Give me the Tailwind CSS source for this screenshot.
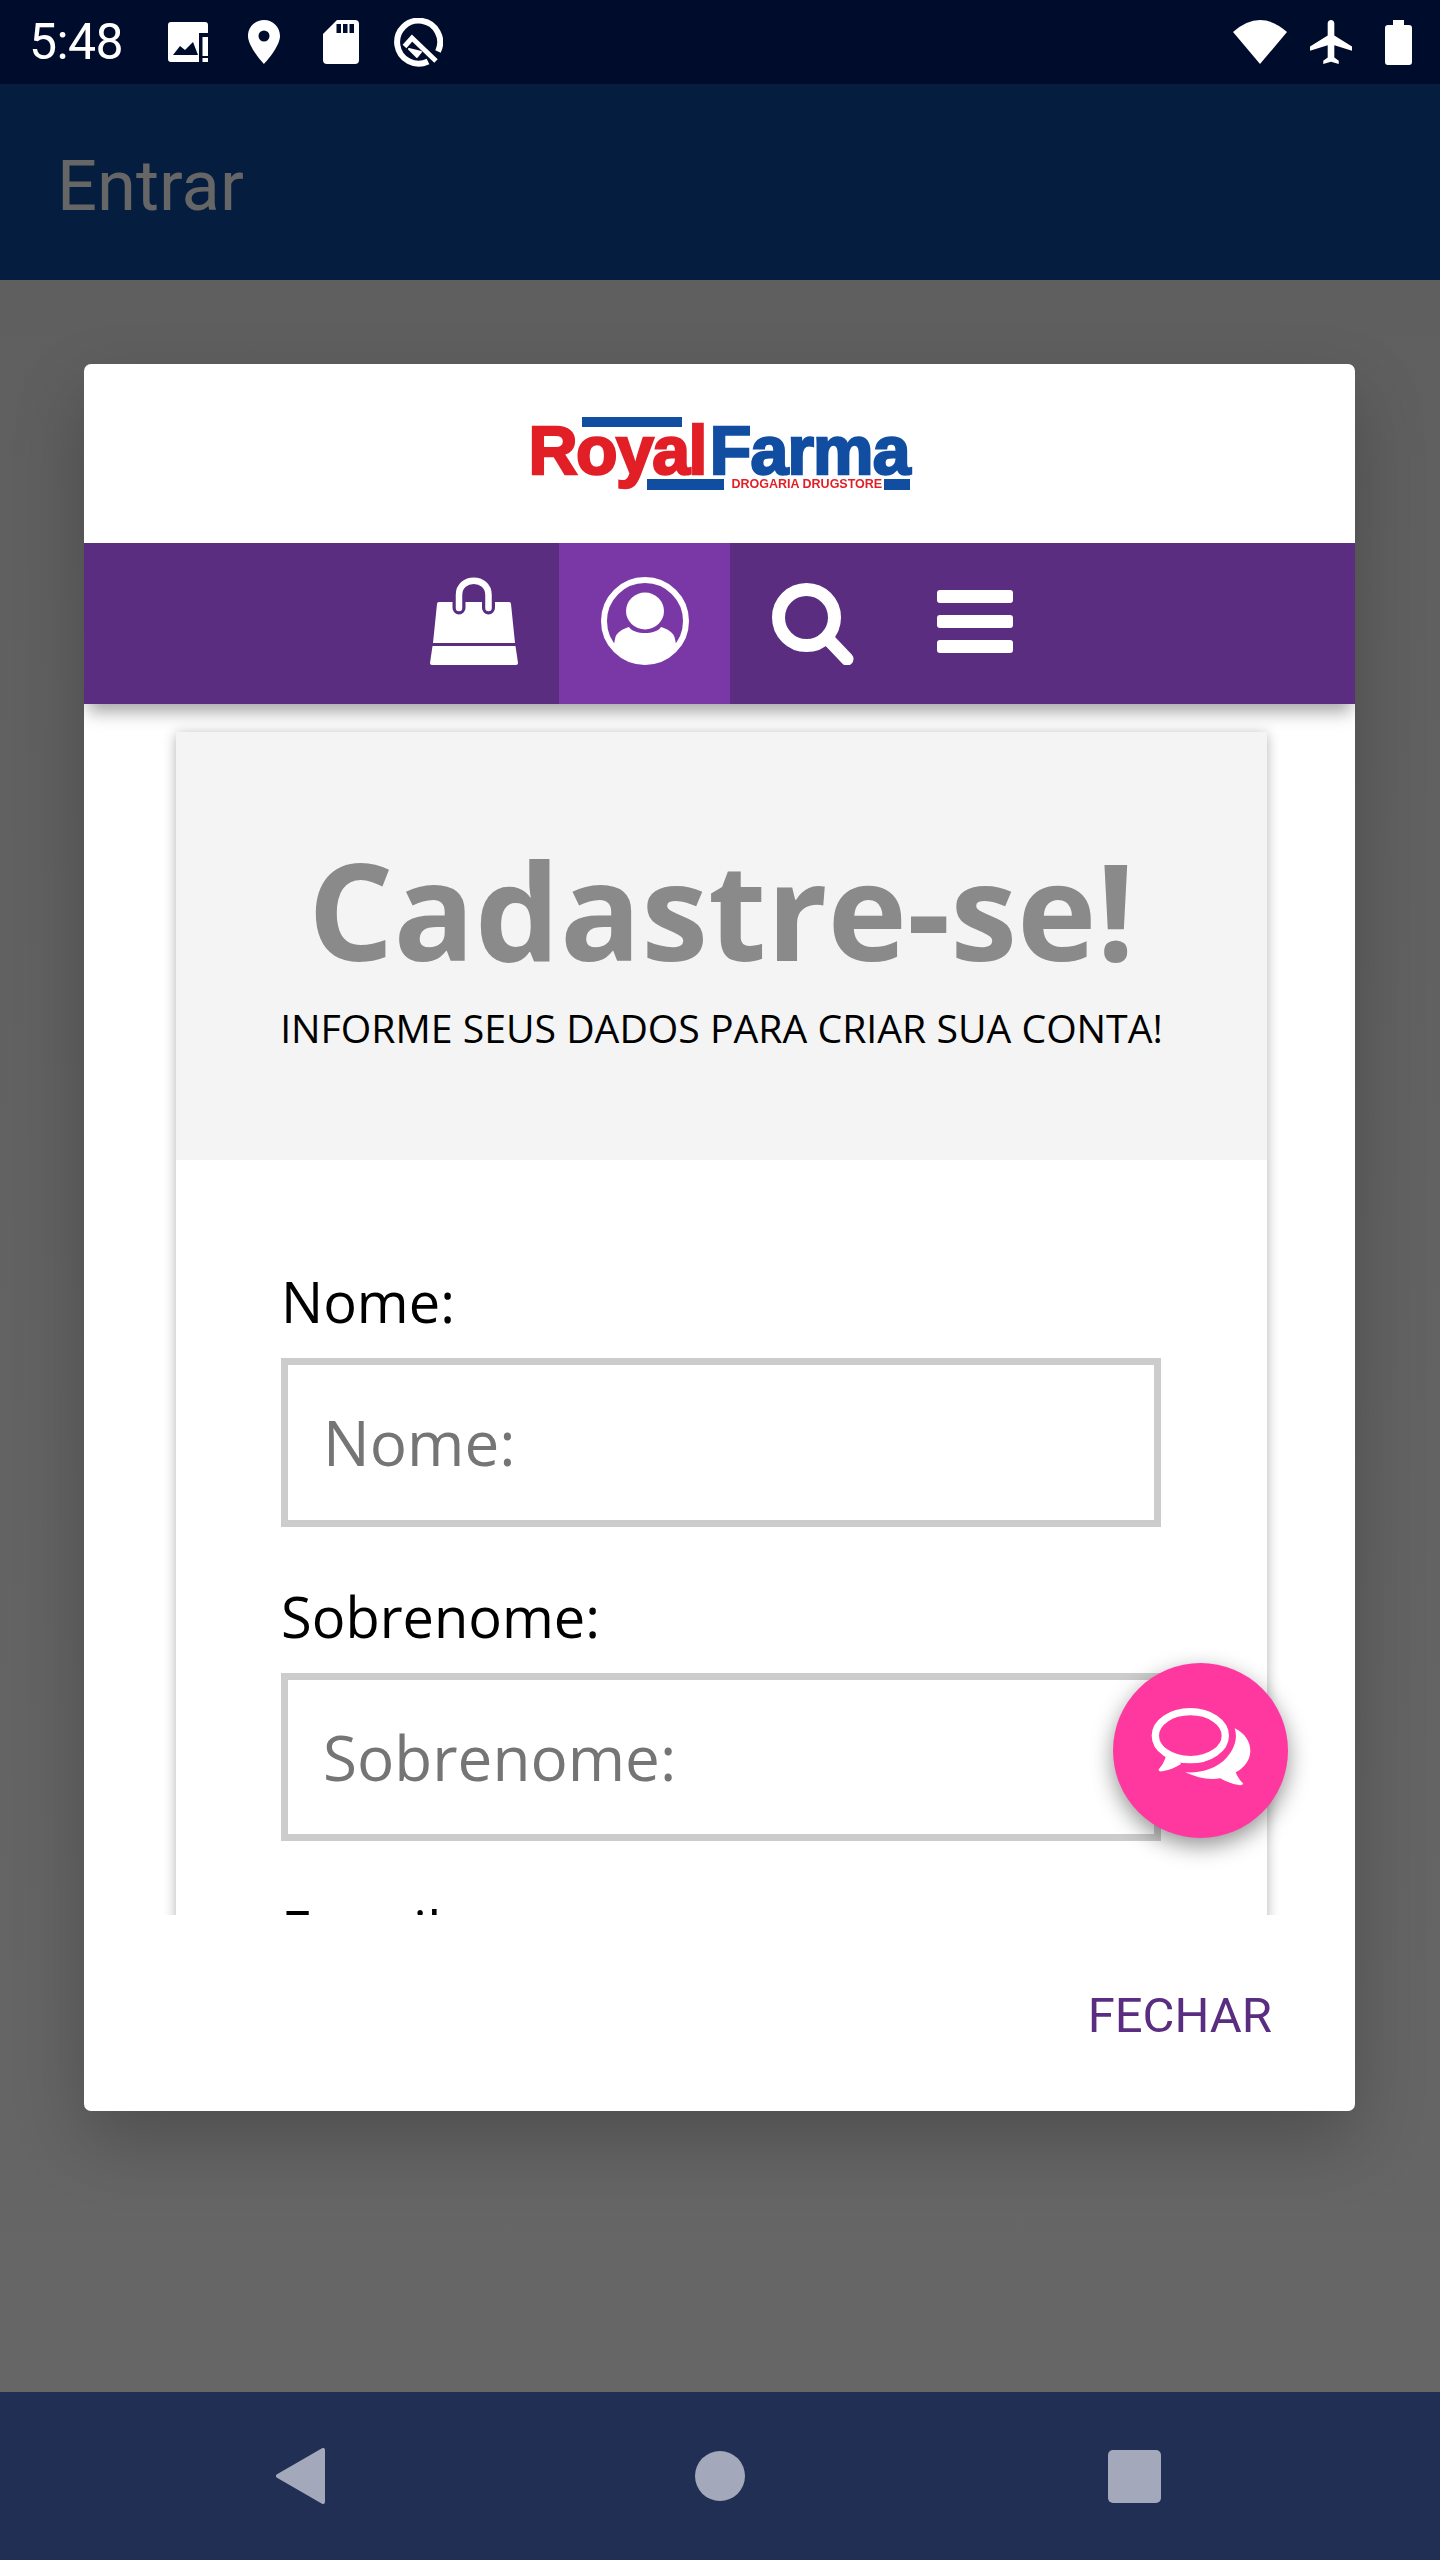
<!DOCTYPE html>
<html lang="pt"><head><meta charset="utf-8"><title>Entrar</title>
<script src="https://cdn.jsdelivr.net/npm/@tailwindcss/browser@4"></script></head>
<body>
<div class="relative flex flex-col w-[1440px] h-[2560px] overflow-hidden bg-[#636363] font-['Open_Sans',sans-serif]">
  <!-- status bar -->
  <div class="flex items-center h-[84px] shrink-0 bg-[#000c2b] pl-[29px] pr-[28px] text-white">
    <span class="font-['Roboto',sans-serif] text-[50px] leading-none w-[139px] tracking-[-0.6px]">5:48</span>
    <svg class="w-[40px] h-[40px]" viewBox="0 0 40 40"><path fill="#fff" fill-rule="evenodd" d="M3 0H37a3 3 0 0 1 3 3V11H31V40H3a3 3 0 0 1-3-3V3a3 3 0 0 1 3-3ZM5 33L12 24L17 28L25 20L30 33Z"/><path fill="#fff" d="M34.500 15h5.500v19h-5.500zM34.500 36h5.500v4h-5.500z"/></svg>
    <svg class="w-[32px] h-[44px] ml-[40px]" viewBox="0 0 32 44"><path fill="#fff" fill-rule="evenodd" d="M16 0C7 0 0 7 0 16C0 27 16 44 16 44C16 44 32 27 32 16C32 7 25 0 16 0ZM16 10.500a5.500 5.500 0 1 1 0 11a5.500 5.500 0 0 1 0-11Z"/></svg>
    <svg class="w-[36px] h-[44px] ml-[43px]" viewBox="0 0 36 44"><path fill="#fff" d="M14 0H32a4 4 0 0 1 4 4V40a4 4 0 0 1-4 4H4a4 4 0 0 1-4-4V14Z"/><path fill="#000c2b" d="M13.500 4h4.500v9h-4.500zM20 4h4.500v9H20zM26.500 4H31v9h-4.500z"/></svg>
    <svg class="w-[49px] h-[49px] ml-[35px]" viewBox="0 0 49 49"><path fill="none" stroke="#fff" stroke-width="6" d="M34 43.500A21.500 21.500 0 1 1 44 33.500"/><path fill="none" stroke="#fff" stroke-width="5" d="M10.500 28.500L18 20L42 43"/><path fill="#fff" stroke="#fff" stroke-width="2" stroke-linejoin="round" d="M15 31L27 34L23 39Z"/></svg>
    <div class="flex-1"></div>
    <svg class="w-[54px] h-[44px]" viewBox="0 0 54 44"><path fill="#fff" d="M0 12Q27 -12 54 12L27 44Z"/></svg>
    <svg class="w-[42px] h-[44px] ml-[23px]" viewBox="2 2 19 20" preserveAspectRatio="none"><path fill="#fff" d="M21 16v-2l-8-5V3.500c0-.83-.67-1.500-1.500-1.500S10 2.670 10 3.500V9l-8 5v2l8-2.500V19l-2 1.500V22l3.500-1 3.500 1v-1.500L13 19v-5.500l8 2.500z"/></svg>
    <svg class="w-[27px] h-[45px] ml-[33px]" viewBox="0 0 27 45"><path fill="#fff" d="M8 0H19V5H24a3 3 0 0 1 3 3V42a3 3 0 0 1-3 3H3a3 3 0 0 1-3-3V8a3 3 0 0 1 3-3H8Z"/></svg>
  </div>
  <!-- app bar -->
  <div class="flex items-center h-[196px] shrink-0 bg-[#051e40] pl-[57px] pt-[8px]">
    <span class="font-['Roboto',sans-serif] text-[70.500px] leading-none text-[#666666]">Entrar</span>
  </div>
  <!-- scrim + dialog -->
  <div class="flex-1 pl-[84px] pt-[84px] bg-linear-to-b from-[#5f5f5f] to-[#666666]">
    <div class="flex flex-col w-[1271px] h-[1747px] bg-white rounded-[7px] shadow-[0_30px_70px_rgba(0,0,0,0.22)] overflow-hidden">
      <!-- logo -->
      <div class="flex justify-center h-[179px] shrink-0 pt-[53px]">
        <div class="relative w-[382px] h-[74px] font-['Liberation_Sans',sans-serif] font-bold">
          <div class="absolute left-[53px] top-0 w-[100px] h-[10px] bg-[#114ea1] blur-[0.7px]"></div>
          <div class="absolute left-0 top-[-5px] flex text-[68px] leading-[76px] tracking-[-1.6px] blur-[0.7px]">
            <span class="text-[#e21f26] [-webkit-text-stroke:2.400px_#e21f26]">Royal</span><span class="ml-[4px] tracking-[-0.8px] text-[#114ea1] [-webkit-text-stroke:2.400px_#114ea1]">Farma</span>
          </div>
          <div class="absolute left-[118px] top-[62px] w-[77px] h-[11px] bg-[#114ea1] blur-[0.6px]"></div>
          <div class="absolute left-[203px] top-[62px] text-[12.500px] leading-[11px] text-[#e21f26] whitespace-nowrap blur-[0.6px]">DROGARIA DRUGSTORE</div>
          <div class="absolute left-[355px] top-[62px] w-[26px] h-[11px] bg-[#114ea1] blur-[0.6px]"></div>
        </div>
      </div>
      <!-- purple menu -->
      <div class="relative z-10 flex items-center h-[161px] shrink-0 bg-[#5a2d81] pl-[304px] shadow-[0_12px_16px_-4px_rgba(0,0,0,0.35)]">
        <div class="flex items-center justify-center w-[171px] h-full pb-[5px]">
          <svg class="w-[88px] h-[88px]" viewBox="0 0 88 88"><path fill="#fff" d="M9 25H79a2 2 0 0 1 2 2L85 66H3L7 27a2 2 0 0 1 2-2Z"/><path fill="#fff" d="M2.500 69H85.500L88 86a2 2 0 0 1-2 2H2a2 2 0 0 1-2-2Z"/><path fill="none" stroke="#5a2d81" stroke-width="13" stroke-linecap="round" d="M29 26V31M58.500 26V31"/><path fill="none" stroke="#fff" stroke-width="6.500" stroke-linecap="round" d="M29 31V18C29 -1 58.500 -1 58.500 18V31"/></svg>
        </div>
        <div class="flex items-center justify-center w-[171px] h-full bg-[#7a38a6] pb-[5px]">
          <svg class="w-[88px] h-[88px]" viewBox="0 0 88 88"><circle cx="44" cy="44" r="41" fill="none" stroke="#fff" stroke-width="6"/><ellipse cx="44" cy="34" rx="19" ry="18.500" fill="#fff"/><path fill="#fff" d="M12 72L14 62C15 55 22 52 28 50C33 58 55 58 60 50C66 52 73 55 74 62L76 72A41 41 0 0 1 12 72Z"/></svg>
        </div>
        <div class="flex items-center justify-center w-[166px] h-full">
          <svg class="w-[82px] h-[82px]" viewBox="0 0 82 82"><circle cx="34.500" cy="34.500" r="28" fill="none" stroke="#fff" stroke-width="13"/><path fill="none" stroke="#fff" stroke-width="13" stroke-linecap="round" d="M56 56L75 76"/></svg>
        </div>
        <div class="flex flex-col justify-center gap-[12px] w-[158px] h-full items-center pb-[5px]">
          <div class="w-[76px] h-[13px] bg-white rounded-[3px]"></div>
          <div class="w-[76px] h-[13px] bg-white rounded-[3px]"></div>
          <div class="w-[76px] h-[13px] bg-white rounded-[3px]"></div>
        </div>
      </div>
      <!-- scrolling body -->
      <div class="h-[1211px] shrink-0 overflow-hidden pl-[92px] pt-[28px]">
        <div class="w-[1091px] bg-white shadow-[0_2px_12px_rgba(0,0,0,0.3)]">
          <div class="flex flex-col items-center h-[428px] bg-[#f4f4f4] pt-[106px]">
            <h1 class="text-[134.500px] leading-[142px] font-bold text-[#8a8a8a]">Cadastre-se!</h1>
            <p class="mt-[21px] text-[39.200px] leading-[54px] text-black">INFORME SEUS DADOS PARA CRIAR SUA CONTA!</p>
          </div>
          <div class="pl-[105px] pt-[103px] h-[1000px]">
            <label class="block text-[56px] leading-[76px] mb-[19px] text-black">Nome:</label>
            <div class="flex items-center w-[880px] h-[169px] border-[7px] border-[#cccccc] bg-white pl-[35px] text-[62px] text-[#757575] mb-[51px]">Nome:</div>
            <label class="block text-[56px] leading-[76px] mb-[19px] text-black">Sobrenome:</label>
            <div class="flex items-center w-[880px] h-[168px] border-[7px] border-[#cccccc] bg-white pl-[35px] text-[62px] text-[#757575] mb-[51px]">Sobrenome:</div>
            <label class="block text-[56px] leading-[76px] text-black">E-mail:</label>
          </div>
        </div>
      </div>
      <!-- footer -->
      <div class="flex-1 flex items-center justify-end pr-[83px] pt-[4px]">
        <span class="font-['Roboto',sans-serif] text-[49px] leading-none text-[#5a2d81]">FECHAR</span>
      </div>
    </div>
  </div>
  <!-- nav bar -->
  <div class="flex items-center h-[168px] shrink-0 bg-[#212f54] pl-[276px]">
    <svg class="w-[49px] h-[56px]" viewBox="0 0 49 56"><path fill="#a3a9ba" stroke="#a3a9ba" stroke-width="4" stroke-linejoin="round" d="M47 2V54L2 28Z"/></svg>
    <div class="w-[50px] h-[50px] ml-[370px] rounded-full bg-[#a3a9ba]"></div>
    <div class="w-[53px] h-[53px] ml-[363px] rounded-[5px] bg-[#a3a9ba]"></div>
  </div>
  <!-- floating chat button -->
  <div class="absolute left-[1113px] top-[1663px] flex items-center justify-center w-[175px] h-[175px] rounded-full bg-[#ff38a0] shadow-[0_8px_22px_rgba(0,0,0,0.42)]">
    <svg class="w-[106.670px] h-[93.330px]" viewBox="440 310 320 280"><ellipse cx="570" cy="405" rx="105" ry="72" fill="none" stroke="#fff" stroke-width="22"/><path fill="#fff" d="M498 462C492 485 482 498 475 506C474 512 480 513 486 512C505 510 525 500 542 490L528 466Z"/><path fill="#fff" d="M703 383C735 398 750 425 750 450C750 475 735 500 706 515C712 530 720 540 728 548C728 553 722 555 715 553C695 550 675 542 660 533C625 538 590 532 555 515C600 518 650 505 680 470C705 440 712 410 703 383Z"/></svg>
  </div>
</div>
</body></html>
